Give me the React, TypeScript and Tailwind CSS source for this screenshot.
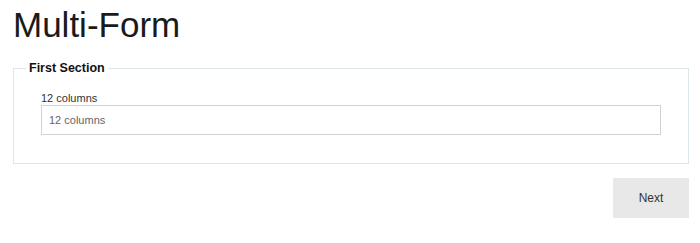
import React from "react";

export default function App() {
  return (
    <div className="w-[700px] h-[243px] bg-white pl-[13px] pr-[11px] pt-[5px] font-['Liberation_Sans',Arial,sans-serif] text-[#222]">
      <h1 className="text-[35px] leading-[40px] font-normal text-[#1a1a1a]">Multi-Form</h1>
      <fieldset className="mt-[16px] border border-[#dde6ea] px-[12px] pb-[28px]">
        <legend className="px-[3px] text-[12.5px] leading-[15px] font-bold text-[#111]">First Section</legend>
        <div className="px-[15px] pt-[15px]">
          <label className="block text-[11px] leading-[14px] text-[#333]">12 columns</label>
          <input
            className="block w-full h-[30px] border border-[#d2d2d2] px-[7px] text-[11px] text-[#333] placeholder:text-[#666] outline-none"
            placeholder="12 columns"
          />
        </div>
      </fieldset>
      <div className="flex justify-end mt-[14px]">
        <button className="w-[76px] h-[40px] bg-[#e8e8e8] text-[12px] text-[#333]">Next</button>
      </div>
    </div>
  );
}
